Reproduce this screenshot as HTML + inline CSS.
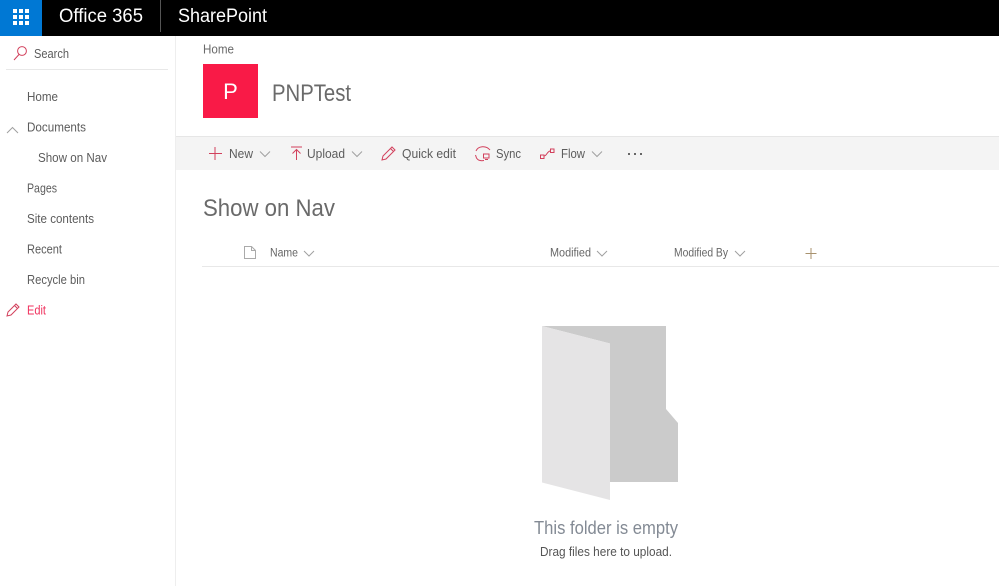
<!DOCTYPE html>
<html lang="en">
<head>
<meta charset="utf-8">
<title>Show on Nav</title>
<style>
html,body{margin:0;padding:0;background:#fff;width:999px;height:586px;overflow:hidden}
svg{display:block}
text{font-family:"Liberation Sans",sans-serif;font-size:12px;fill:#555}
.nav{font-size:12.5px;fill:#5c5c5c}
.cmd{font-size:12.5px;fill:#5c5c5c}
.hd{font-size:11.5px;fill:#666}
.ic{fill:none;stroke:#d2405c;stroke-width:1}
.chev{fill:none;stroke:#a0a0a0;stroke-width:1}
</style>
</head>
<body>
<svg width="999" height="586" viewBox="0 0 999 586" xmlns="http://www.w3.org/2000/svg">
<rect width="999" height="586" fill="#fff"/>
<!-- top bar -->
<rect width="999" height="36" fill="#000"/>
<rect width="42" height="36" fill="#0078d4"/>
<g fill="#fff">
<rect x="13" y="9" width="4" height="4"/><rect x="19" y="9" width="4" height="4"/><rect x="25" y="9" width="4" height="4"/>
<rect x="13" y="15" width="4" height="4"/><rect x="19" y="15" width="4" height="4"/><rect x="25" y="15" width="4" height="4"/>
<rect x="13" y="21" width="4" height="4"/><rect x="19" y="21" width="4" height="4"/><rect x="25" y="21" width="4" height="4"/>
</g>
<text x="59" y="22" textLength="84" lengthAdjust="spacingAndGlyphs" style="font-size:19px;fill:#fff">Office 365</text>
<rect x="160" y="0" width="1" height="32" fill="#555"/>
<text x="178" y="22" textLength="89" lengthAdjust="spacingAndGlyphs" style="font-size:19px;fill:#fff">SharePoint</text>

<!-- sidebar -->
<rect x="175" y="36" width="1" height="550" fill="#eeeeee"/>
<circle cx="22" cy="51" r="4.400" class="ic"/>
<path d="M19 54.500L14 60" class="ic"/>
<text x="34" y="58" textLength="35" lengthAdjust="spacingAndGlyphs" class="nav">Search</text>
<rect x="6" y="69" width="162" height="1" fill="#e8e8e8"/>
<text x="27" y="101" textLength="31" lengthAdjust="spacingAndGlyphs" class="nav">Home</text>
<path d="M7 133L12.500 127.500L18 133" class="chev"/>
<text x="27" y="131.500" textLength="59" lengthAdjust="spacingAndGlyphs" class="nav">Documents</text>
<text x="38" y="162" textLength="69" lengthAdjust="spacingAndGlyphs" class="nav">Show on Nav</text>
<text x="27" y="192.500" textLength="30" lengthAdjust="spacingAndGlyphs" class="nav">Pages</text>
<text x="27" y="223" textLength="67" lengthAdjust="spacingAndGlyphs" class="nav">Site contents</text>
<text x="27" y="253.500" textLength="35" lengthAdjust="spacingAndGlyphs" class="nav">Recent</text>
<text x="27" y="284" textLength="58" lengthAdjust="spacingAndGlyphs" class="nav">Recycle bin</text>
<path d="M7 316L8 312L16 304L19 307L11 315Z M14.500 305.500L17.500 308.500" class="ic"/>
<text x="27" y="314.500" textLength="19" lengthAdjust="spacingAndGlyphs" style="font-size:12.5px;fill:#f0335f">Edit</text>

<!-- header -->
<text x="203" y="53.500" textLength="31" lengthAdjust="spacingAndGlyphs" style="font-size:12.5px;fill:#6a6a6a">Home</text>
<rect x="203" y="64" width="55" height="54" fill="#f91a47"/>
<text x="230.500" y="99" text-anchor="middle" style="font-size:22px;fill:#fff">P</text>
<text x="272" y="101" textLength="79" lengthAdjust="spacingAndGlyphs" style="font-size:24px;fill:#6a6a6a">PNPTest</text>

<!-- command bar -->
<rect x="176" y="136" width="823" height="1" fill="#e6e6e6"/>
<rect x="176" y="137" width="823" height="33" fill="#f4f4f4"/>
<path d="M215 147V160M209 153.500H222" class="ic"/>
<text x="229" y="158" textLength="24" lengthAdjust="spacingAndGlyphs" class="cmd">New</text>
<path d="M260 151.500L265 156.500L270 151.500" class="chev"/>
<path d="M291 147H302M296.500 160V149.500M292.500 153.500L296.500 149.500L300.500 153.500" class="ic"/>
<text x="307" y="158" textLength="38" lengthAdjust="spacingAndGlyphs" class="cmd">Upload</text>
<path d="M352 151.500L357 156.500L362 151.500" class="chev"/>
<path d="M382 160L383 156L392 147L395 150L386 159Z M390.500 148.500L393.500 151.500" class="ic"/>
<text x="402" y="158" textLength="54" lengthAdjust="spacingAndGlyphs" class="cmd">Quick edit</text>
<path d="M476 151C478 146 486 145 490 150M475.500 155L476.500 158C478 160.500 481 161 484 160.500" class="ic"/>
<rect x="483.500" y="154" width="5.500" height="4" class="ic"/>
<path d="M485 159.500H488" class="ic"/>
<text x="496" y="158" textLength="25" lengthAdjust="spacingAndGlyphs" class="cmd">Sync</text>
<rect x="540.500" y="155" width="3.500" height="3.500" class="ic"/>
<rect x="550.500" y="149" width="3.500" height="3.500" class="ic"/>
<path d="M544 156C547 156 547 151 550.500 151" class="ic"/>
<text x="561" y="158" textLength="24" lengthAdjust="spacingAndGlyphs" class="cmd">Flow</text>
<path d="M592 151.500L597 156.500L602 151.500" class="chev"/>
<g fill="#666"><rect x="628" y="153" width="2" height="2"/><rect x="634" y="153" width="2" height="2"/><rect x="640" y="153" width="2" height="2"/></g>

<!-- title -->
<text x="203" y="216" textLength="132" lengthAdjust="spacingAndGlyphs" style="font-size:24px;fill:#6a6a6a">Show on Nav</text>

<!-- column headers -->
<path d="M244.500 246.500H251.500L255.500 250.500V258.500H244.500Z M251.500 246.500V250.500H255.500" fill="none" stroke="#aaa" stroke-width="1"/>
<text x="270" y="256.500" textLength="28" lengthAdjust="spacingAndGlyphs" class="hd">Name</text>
<path d="M304 251L309 256L314 251" class="chev"/>
<text x="550" y="256.500" textLength="41" lengthAdjust="spacingAndGlyphs" class="hd">Modified</text>
<path d="M597 251L602 256L607 251" class="chev"/>
<text x="674" y="256.500" textLength="54" lengthAdjust="spacingAndGlyphs" class="hd">Modified By</text>
<path d="M735 251L740 256L745 251" class="chev"/>
<path d="M811 248V259M805.500 253.500H816.500" fill="none" stroke="#a8926e" stroke-width="1"/>
<rect x="202" y="266" width="797" height="1" fill="#e8e8e8"/>

<!-- folder -->
<path d="M542 326H666V409L678 423V482H610V343.500Z" fill="#cbcbcb"/>
<path d="M542 326L610 343.500V500L542 482.500Z" fill="#e5e4e5"/>
<text x="534" y="534" textLength="144" lengthAdjust="spacingAndGlyphs" style="font-size:18.500px;fill:#838a94">This folder is empty</text>
<text x="540" y="556" textLength="132" lengthAdjust="spacingAndGlyphs" style="font-size:12.500px;fill:#555">Drag files here to upload.</text>
</svg>
</body>
</html>
